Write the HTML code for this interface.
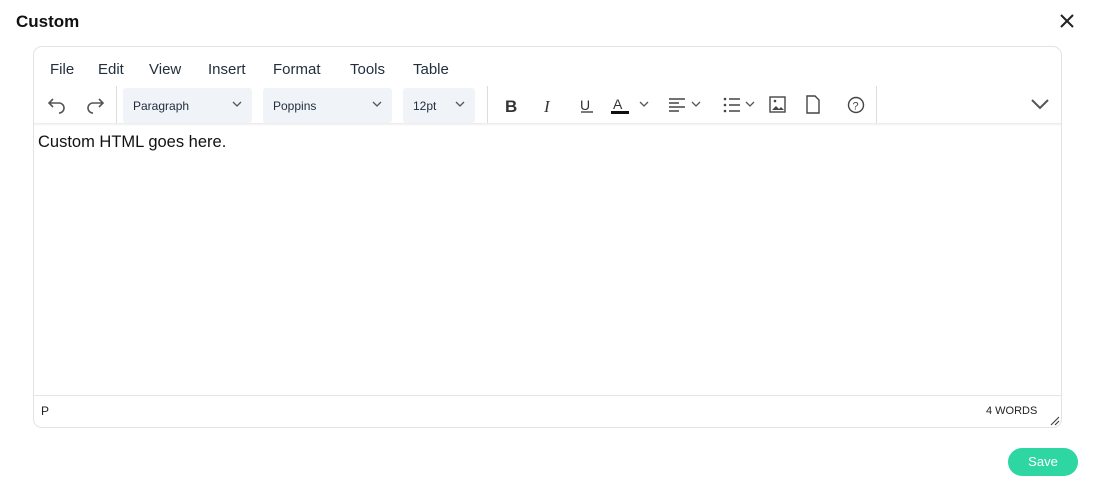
<!DOCTYPE html><html><head><style>
*{box-sizing:border-box;margin:0;padding:0}
body{width:1094px;height:495px;background:#fff;font-family:"Liberation Sans",sans-serif;color:#222f3e;position:relative;overflow:hidden}
.abs{position:absolute}
.title{left:16px;top:12px;font-size:17px;font-weight:bold;color:#111}
.box{left:33px;top:46px;width:1029px;height:382px;border:1px solid #e3e3e3;border-radius:9px}
.menu{top:61px;font-size:15px;color:#222f3e}
.sel{top:88px;height:35px;background:#f0f3f8;border-radius:3px;font-size:12px;padding:11px 10px}
.sep{top:86px;width:1px;height:40px;background:#ddd}
svg{position:absolute}
</style></head><body>
<div class="abs title">Custom</div>
<svg style="left:1059px;top:13px" width="16" height="16" viewBox="0 0 16 16"><path d="M2 2L14 14M14 2L2 14" stroke="#222" stroke-width="2"/></svg>
<div class="abs box"></div>
<div class="abs menu" style="left:50px">File</div>
<div class="abs menu" style="left:98px">Edit</div>
<div class="abs menu" style="left:149px">View</div>
<div class="abs menu" style="left:208px">Insert</div>
<div class="abs menu" style="left:273px">Format</div>
<div class="abs menu" style="left:350px">Tools</div>
<div class="abs menu" style="left:413px">Table</div>
<svg style="left:47px;top:95px" width="20" height="20" viewBox="0 0 20 20"><path d="M6 4L2 8L6 12M2 8H12A5 5 0 0 1 12 18" fill="none" stroke="#555" stroke-width="1.6"/></svg>
<svg style="left:85px;top:95px" width="20" height="20" viewBox="0 0 20 20"><path d="M14 4L18 8L14 12M18 8H8A5 5 0 0 0 8 18" fill="none" stroke="#555" stroke-width="1.6"/></svg>
<div class="abs sep" style="left:116px"></div>
<div class="abs sel" style="left:123px;width:129px">Paragraph</div>
<div class="abs sel" style="left:263px;width:129px">Poppins</div>
<div class="abs sel" style="left:403px;width:72px">12pt</div>
<svg style="left:0;top:0" width="1094" height="130"><g fill="none" stroke="#555" stroke-width="1.3"><path d="M233 102l4 4 4-4M373 102l4 4 4-4M456 102l4 4 4-4M640 102l4 4 4-4M692 102l4 4 4-4M746 102l4 4 4-4"/><path d="M1032 100l8 8 8-8" stroke-width="2"/></g>
<text x="505" y="112" font-size="17" font-weight="bold" fill="#333" font-family="Liberation Sans">B</text>
<text x="544" y="112" font-size="17" font-style="italic" fill="#333" font-family="Liberation Serif">I</text>
<text x="580" y="110" font-size="14" fill="#333" font-family="Liberation Sans">U</text>
<path d="M581 112h12" stroke="#333" stroke-width="1.3"/>
<text x="613" y="109" font-size="14" fill="#333" font-family="Liberation Sans">A</text>
<rect x="611" y="111" width="18" height="3" fill="#111"/>
<g stroke="#444" stroke-width="1.6"><path d="M669 99h16M669 103h10M669 107h16M669 111h10"/><path d="M729 99h11M729 105h11M729 111h11"/></g>
<g fill="#444"><circle cx="725" cy="99" r="1.3"/><circle cx="725" cy="105" r="1.3"/><circle cx="725" cy="111" r="1.3"/></g>
<rect x="770" y="97" width="15" height="15" fill="none" stroke="#444" stroke-width="1.4"/><path d="M772 110l4-4 3 3 2-2 3 3z" fill="#444"/><circle cx="775" cy="101" r="1.3" fill="#444"/>
<path d="M807 96h8l4 4v13h-12z" fill="none" stroke="#444" stroke-width="1.4"/>
<circle cx="856" cy="105" r="7.5" fill="none" stroke="#444" stroke-width="1.4"/><text x="852.5" y="109.5" font-size="11" fill="#444" font-family="Liberation Sans">?</text>
</svg>
<div class="abs sep" style="left:487px"></div>
<div class="abs sep" style="left:876px"></div>
<div class="abs" style="left:34px;top:123px;width:1027px;height:3px;background:linear-gradient(#eaeaea,#fff)"></div>
<div class="abs" style="left:38px;top:133px;font-size:16.5px;color:#111">Custom HTML goes here.</div>
<div class="abs" style="left:34px;top:395px;width:1027px;height:1px;background:#e5e5e5"></div>
<div class="abs" style="left:41px;top:404px;font-size:12px;color:#222">P</div>
<div class="abs" style="left:986px;top:405px;font-size:11px;color:#222">4 WORDS</div>
<svg style="left:1050px;top:416px" width="10" height="10"><path d="M1 9L9 1M5 9L9 5" stroke="#444" stroke-width="1.2"/></svg>
<div class="abs" style="left:1008px;top:448px;width:70px;height:28px;background:#2ed6a1;border-radius:14px;color:#fff;font-size:13px;text-align:center;line-height:28px">Save</div>
</body></html>
